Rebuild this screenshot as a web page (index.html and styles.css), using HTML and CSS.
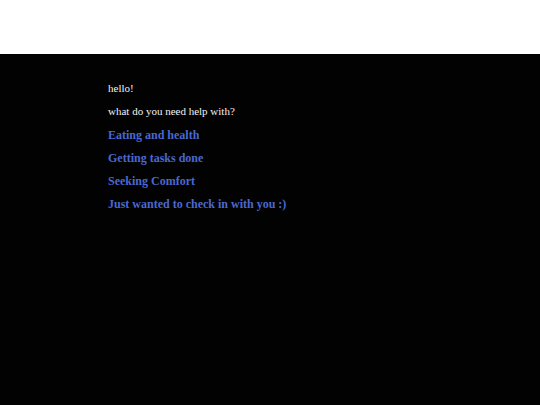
FILE: index.html
```html
<!DOCTYPE html>
<html lang="en">

<head>
    <meta charset="UTF-8">
    <meta name="viewport" content="width=device-width, initial-scale=1.0">
    <title>Check In</title>

    <link rel="stylesheet" href="styles.css">
</head>

<body>

    <!-- Top Bar -->
    <div class="topbar"></div>

    <!-- Chat Area -->
    <div class="chat">
        <p class="line">hello!</p>
        <p class="line">what do you need help with?</p>

        <!-- Options -->
        <a class="option" href="#">Eating and health</a>
        <a class="option" href="#">Getting tasks done</a>
        <a class="option" href="#">Seeking Comfort</a>
        <a class="option" href="#">Just wanted to check in with you :)</a>
    </div>

</body>

</html>
```

FILE: styles.css
```css
/* General Styles */
body {
    margin: 0;
    font-family: 'Liberation Serif', 'DejaVu Serif', serif;
    background: #000;
    height: 100vh;
    display: flex;
    flex-direction: column;
}

/* White strip at the top */
.topbar {
    height: 54px;
    background: #fff;
}

/* Chat Area */
.chat {
    flex: 1;
    background: #020202;
    padding: 28px 0 0 108px;
    display: flex;
    flex-direction: column;
    align-items: flex-start;
    gap: 10.3px;
}

.line {
    margin: 0;
    font-size: 11px;
    line-height: 13px;
    color: #f2f2f2;
}

/* Option Links */
.option {
    font-size: 12px;
    line-height: 13px;
    font-weight: bold;
    color: #4a68d0;
    text-decoration: none;
}

.option:hover {
    text-decoration: underline;
}
```
